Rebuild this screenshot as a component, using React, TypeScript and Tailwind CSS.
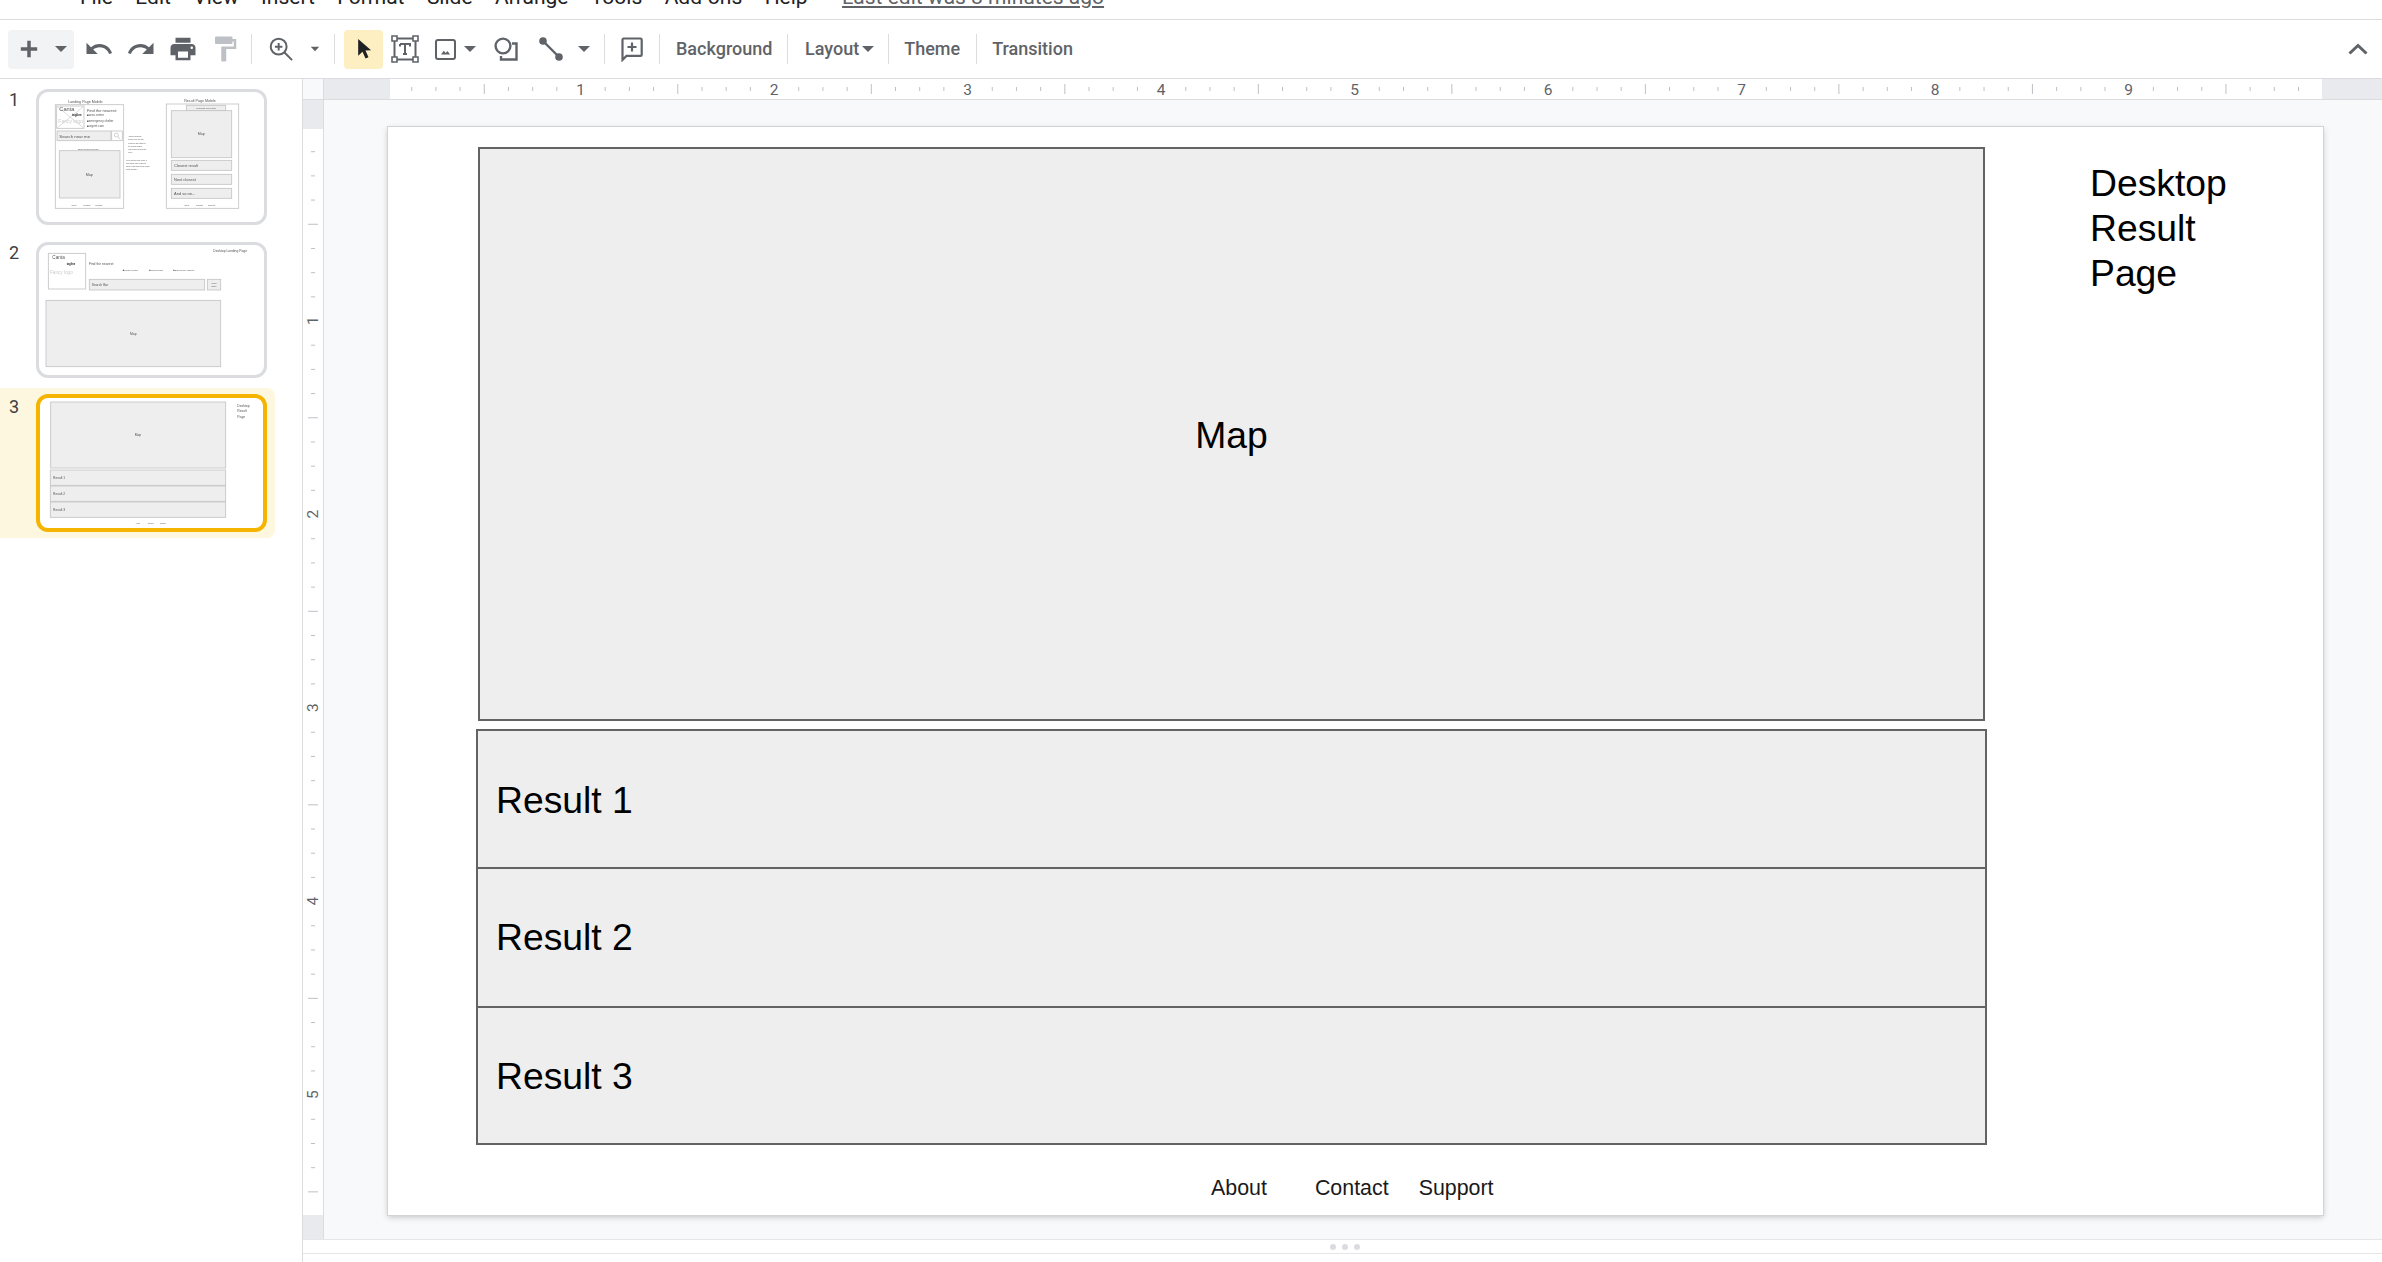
import type { ReactNode } from 'react';

const menus = ['File', 'Edit', 'View', 'Insert', 'Format', 'Slide', 'Arrange', 'Tools', 'Add-ons', 'Help'];
const results = [
  { label: 'Result 1', row: 'h-[136px] pt-[4px]' },
  { label: 'Result 2', row: 'h-[139px] border-t-2 border-[#636363] pt-[1px]' },
  { label: 'Result 3', row: 'h-[137px] border-t-2 border-[#636363] pt-[2px]' },
];
const hTicks = Array.from({ length: 80 }, (_, i) => i);
const vTicks = Array.from({ length: 45 }, (_, i) => i);

function Caret({ className = '' }: { className?: string }) {
  return (
    <svg width="14" height="8" viewBox="0 0 14 8" className={className}>
      <path d="M1 1h12L7 7z" fill="#5f6368" />
    </svg>
  );
}

function Icon({ children, size = 30 }: { children: ReactNode; size?: number }) {
  return (
    <svg width={size} height={size} viewBox="0 0 24 24" fill="#5f6368">
      {children}
    </svg>
  );
}

function Slot({ className, children }: { className: string; children?: ReactNode }) {
  return <div className={`flex h-full shrink-0 items-center justify-center ${className}`}>{children}</div>;
}

function Sep({ className }: { className: string }) {
  return <div className={`h-[30px] w-px shrink-0 bg-[#dadce0] ${className}`} />;
}

function Toolbar() {
  return (
    <div className="flex h-[59px] shrink-0 items-center border-b border-[#dadce0] pl-[8px] text-[18px] font-medium text-[#5f6368]">
      <div className="flex h-[39px] w-[66px] shrink-0 items-center rounded bg-[#f1f3f4] pl-[7px]">
        <Icon size={28}>
          <path d="M19 13.5h-5.5V19h-3v-5.5H5v-3h5.5V5h3v5.5H19z" />
        </Icon>
        <Caret className="ml-[11px]" />
      </div>
      <Slot className="ml-[4px] w-[42px]">
        <Icon>
          <path d="M12.5 8c-2.65 0-5.05.99-6.9 2.6L2 7v9h9l-3.62-3.62c1.39-1.16 3.16-1.88 5.12-1.88 3.54 0 6.55 2.31 7.6 5.5l2.37-.78C21.08 11.03 17.15 8 12.5 8z" />
        </Icon>
      </Slot>
      <Slot className="w-[42px]">
        <Icon>
          <path d="M18.4 10.6C16.55 8.99 14.15 8 11.5 8c-4.65 0-8.58 3.03-9.96 7.22L3.9 16c1.05-3.19 4.05-5.5 7.6-5.5 1.95 0 3.73.72 5.12 1.88L13 16h9V7l-3.6 3.6z" />
        </Icon>
      </Slot>
      <Slot className="w-[42px]">
        <Icon>
          <path d="M19 8H5c-1.66 0-3 1.34-3 3v6h4v4h12v-4h4v-6c0-1.66-1.34-3-3-3zm-3 11H8v-5h8v5zm3-7c-.55 0-1-.45-1-1s.45-1 1-1 1 .45 1 1-.45 1-1 1zm-1-9H6v4h12V3z" />
        </Icon>
      </Slot>
      <Slot className="w-[42px]">
        <svg width="30" height="30" viewBox="0 0 24 24" fill="#bdc1c6">
          <path d="M18 4V3c0-.55-.45-1-1-1H5c-.55 0-1 .45-1 1v4c0 .55.45 1 1 1h12c.55 0 1-.45 1-1V6h1v4H9v11c0 .55.45 1 1 1h2c.55 0 1-.45 1-1v-9h8V4h-3z" />
        </svg>
      </Slot>
      <Sep className="ml-[5px]" />
      <Slot className="w-[58px]">
        <svg width="28" height="28" viewBox="0 0 24 24" fill="none" stroke="#5f6368" strokeWidth="1.7">
          <circle cx="10" cy="10" r="6.8" />
          <path d="M15 15l6.5 6.5M10 6.8v6.4M6.8 10h6.4" />
        </svg>
      </Slot>
      <Slot className="w-[10px]">
        <Caret />
      </Slot>
      <Sep className="ml-[14px]" />
      <div className="ml-[9px] flex h-[39px] w-[39px] shrink-0 items-center justify-center rounded bg-[#feefc3]">
        <svg width="20" height="24" viewBox="0 0 24 28" fill="#202124">
          <path d="M5 2v20l5.2-4.8 3.6 8.3 3.6-1.6-3.6-8 6.7-.4z" />
        </svg>
      </div>
      <Slot className="w-[44px]">
        <svg width="28" height="28" viewBox="0 0 28 28" fill="none" stroke="#5f6368" strokeWidth="2">
          <path d="M3.5 3.5h21v21h-21z" />
          <path d="M1 1h5v5H1zM22 1h5v5h-5zM1 22h5v5H1zM22 22h5v5h-5z" fill="#fff" strokeWidth="1.6" />
          <path d="M9 9h10v2.5M9 11.5V9M14 9v10M12 19h4" strokeWidth="2" />
        </svg>
      </Slot>
      <Slot className="w-[36px]">
        <svg width="21" height="21" viewBox="0 0 21 21" fill="none" stroke="#5f6368" strokeWidth="2">
          <rect x="1" y="1" width="19" height="19" rx="2" />
          <path d="M6 15.5l2.8-3.8 2 2.4 1.7-2 2.6 3.4z" fill="#5f6368" stroke="none" />
        </svg>
      </Slot>
      <Slot className="w-[14px]">
        <Caret />
      </Slot>
      <Slot className="w-[58px]">
        <svg width="24" height="24" viewBox="0 0 24 24" fill="none" stroke="#5f6368" strokeWidth="2.4">
          <circle cx="9" cy="9" r="7.4" />
          <path d="M18 6.5h4.5V22.5H7V19" />
        </svg>
      </Slot>
      <Slot className="w-[32px]">
        <svg width="24" height="24" viewBox="0 0 24 24" fill="none" stroke="#5f6368" strokeWidth="2.4">
          <path d="M4 4l16 16" />
          <circle cx="4" cy="4" r="2.6" fill="#5f6368" />
          <circle cx="20" cy="20" r="2.6" fill="#5f6368" />
        </svg>
      </Slot>
      <Slot className="w-[34px]">
        <Caret />
      </Slot>
      <Sep className="ml-[3px]" />
      <Slot className="w-[54px]">
        <svg width="22" height="25" viewBox="0 0 22 25" fill="none" stroke="#5f6368" strokeWidth="2.2">
          <path d="M2.5 1.5h17a1.2 1.2 0 0 1 1.2 1.2v15a1.2 1.2 0 0 1-1.2 1.2H5.5l-4 4V2.7a1.2 1.2 0 0 1 1-1.2z" />
          <path d="M11 5.5v9M6.5 10h9" />
        </svg>
      </Slot>
      <Sep className="" />
      <span className="mb-[1px] ml-[16px] w-[96px] shrink-0">Background</span>
      <Sep className="ml-[15px]" />
      <span className="mb-[1px] ml-[17px] flex shrink-0 items-center">
        Layout
        <Caret className="ml-[2px]" />
      </span>
      <Sep className="ml-[13px]" />
      <span className="mb-[1px] ml-[15px] shrink-0">Theme</span>
      <Sep className="ml-[16px]" />
      <span className="mb-[1px] ml-[15px] shrink-0">Transition</span>
      <svg width="20" height="12" viewBox="0 0 20 12" fill="none" stroke="#5f6368" strokeWidth="3" className="ml-auto mr-[14px]">
        <path d="M1.5 10.5L10 2.5l8.5 8" />
      </svg>
    </div>
  );
}

function HorizontalRuler() {
  return (
    <svg width="2079" height="21" viewBox="0 0 2079 21" className="block shrink-0">
      <rect width="2079" height="20" fill="#fff" />
      <rect width="20" height="20" fill="#f8f9fa" />
      <rect x="21" width="66" height="20" fill="#e8eaed" />
      <rect x="2019" width="60" height="20" fill="#e8eaed" />
      <rect x="20" width="1" height="20" fill="#dadce0" />
      <rect y="20" width="2079" height="1" fill="#dadce0" />
      {hTicks.map((i) => {
        const x = 84 + i * 24.19;
        if (i === 0) return null;
        if (i % 8 === 0)
          return (
            <text key={i} x={x} y="16" textAnchor="middle" fontSize="15.5" fontFamily="Roboto, sans-serif" fill="#5f6368">
              {i / 8}
            </text>
          );
        const half = i % 4 === 0;
        return <rect key={i} x={x} y={half ? 5 : 8} width="1" height={half ? 10 : 4} fill="#bdc1c6" />;
      })}
    </svg>
  );
}

function VerticalRuler() {
  return (
    <svg width="21" height="1139" viewBox="0 0 21 1139" className="block shrink-0">
      <rect width="20" height="1139" fill="#fff" />
      <rect width="20" height="29" fill="#e8eaed" />
      <rect y="1115" width="20" height="24" fill="#e8eaed" />
      <rect x="20" width="1" height="1139" fill="#dadce0" />
      {vTicks.map((i) => {
        const y = 27 + i * 24.19;
        if (i === 0) return null;
        if (i % 8 === 0)
          return (
            <text
              key={i}
              x="10"
              y={y}
              transform={`rotate(-90 10 ${y})`}
              textAnchor="middle"
              dominantBaseline="central"
              fontSize="15.5"
              fontFamily="Roboto, sans-serif"
              fill="#5f6368"
            >
              {i / 8}
            </text>
          );
        const half = i % 4 === 0;
        return <rect key={i} x={half ? 5 : 8} y={y} width={half ? 10 : 4} height="1" fill="#bdc1c6" />;
      })}
    </svg>
  );
}

// thumbnail drawings, coordinates are in 3x of the thumbnail
function T({ x, y, s = 11, a, c = '#555', b, children }: { x: number; y: number; s?: number; a?: 'middle'; c?: string; b?: boolean; children: string }) {
  return (
    <text x={x} y={y} fontSize={s} textAnchor={a} fill={c} fontWeight={b ? 700 : 400} dominantBaseline="central" fontFamily="'Liberation Sans', sans-serif">
      {children}
    </text>
  );
}

function R({ x, y, w, h, f = '#eeeeee' }: { x: number; y: number; w: number; h: number; f?: string }) {
  return <rect x={x} y={y} width={w} height={h} fill={f} stroke="#c4c4c4" strokeWidth="2.5" />;
}

function ThumbOne() {
  return (
    <svg viewBox="117 36 675 390" className="h-full w-full blur-[0.3px]">
      <T x={256} y={65} a="middle">Landing Page Mobile</T>
      <R x={166} y={74} w={205} h={311} f="#fff" />
      <R x={170} y={78} w={82} h={67} f="#fff" />
      <path d="M170 78l82 67M252 78l-82 67" stroke="#ccc" strokeWidth="2" />
      <T x={178} y={87} s={17}>Canta</T>
      <T x={216} y={104} s={9} c="#222" b>tagline</T>
      <T x={175} y={122} s={15} c="#ccc">Fancy logo</T>
      <T x={261} y={91} s={12}>Find the nearest:</T>
      <T x={261} y={104} s={9}>■area center</T>
      <T x={261} y={122} s={9}>■emergency shelter</T>
      <T x={261} y={137} s={9}>■urgent care</T>
      <R x={171} y={153} w={162} h={29} />
      <T x={178} y={170} s={13}>Search near me</T>
      <R x={335} y={153} w={32} h={29} f="#fff" />
      <circle cx="349" cy="165" r="6" fill="none" stroke="#bbb" strokeWidth="2" />
      <path d="M353 170l8 8" stroke="#bbb" strokeWidth="2" />
      <T x={265} y={208} s={6} a="middle" c="#444">some helper text below</T>
      <R x={178} y={212} w={182} h={142} />
      <T x={268} y={284} a="middle">Map</T>
      <T x={213} y={376} s={6}>About</T>
      <T x={250} y={376} s={6}>Contact</T>
      <T x={286} y={376} s={6}>Support</T>
      <T x={385} y={168} s={5}>"Upon clicking the</T>
      <T x={385} y={178} s={5}>search icon, the map</T>
      <T x={385} y={188} s={5}>zooms in and results of</T>
      <T x={385} y={198} s={5}>the nearest search</T>
      <T x={385} y={207} s={5}>criteria appear below the</T>
      <T x={385} y={215} s={5}>map."</T>
      <T x={378} y={240} s={5}>"Upon clicking each result, a</T>
      <T x={378} y={250} s={5}>new tab will open to show a</T>
      <T x={378} y={259} s={5}>google result page for the actual</T>
      <T x={378} y={268} s={5}>facility website."</T>
      <T x={600} y={62} a="middle">Result Page Mobile</T>
      <R x={499} y={72} w={217} h={313} f="#fff" />
      <R x={559} y={76} w={118} h={16} />
      <T x={618} y={84} s={6} a="middle">Searching with results</T>
      <R x={514} y={92} w={181} h={141} />
      <T x={604} y={163} a="middle">Map</T>
      <R x={514} y={241} w={181} h={30} />
      <T x={522} y={256} s={12}>Closest result</T>
      <R x={514} y={283} w={181} h={30} />
      <T x={522} y={298} s={12}>Next closest</T>
      <R x={514} y={325} w={181} h={30} />
      <T x={522} y={340} s={12}>And so on...</T>
      <T x={551} y={376} s={6}>About</T>
      <T x={588} y={376} s={6}>Contact</T>
      <T x={624} y={376} s={6}>Support</T>
    </svg>
  );
}

function ThumbTwo() {
  return (
    <svg viewBox="117 45 675 390" className="h-full w-full blur-[0.3px]">
      <T x={640} y={64} s={10}>Desktop Landing Page</T>
      <R x={145} y={70} w={112} h={107} f="#fff" />
      <T x={157} y={82} s={14}>Canta</T>
      <T x={200} y={104} s={8} c="#222" b>tagline</T>
      <T x={150} y={127} s={14} c="#ccc">Fancy logo</T>
      <T x={267} y={101} s={10}>Find the nearest:</T>
      <T x={368} y={119} s={7}>■Urban Center</T>
      <T x={448} y={119} s={7}>■Urgent Care</T>
      <T x={520} y={119} s={7}>■Emergency Shelter</T>
      <R x={268} y={148} w={346} h={32} />
      <T x={275} y={164} s={10}>Search Bar</T>
      <R x={622} y={148} w={40} h={32} />
      <T x={642} y={160} s={5} a="middle">Search</T>
      <T x={642} y={168} s={5} a="middle">Button</T>
      <R x={138} y={211} w={524} h={199} />
      <T x={400} y={313} s={10} a="middle">Map</T>
    </svg>
  );
}

function ThumbThree() {
  return (
    <svg viewBox="120 40 669 390" className="h-full w-full blur-[0.3px]">
      <R x={152} y={52} w={525} h={198} />
      <T x={414} y={151} s={10} a="middle">Map</T>
      <R x={151} y={256} w={526} h={46} />
      <R x={151} y={304} w={526} h={46} />
      <R x={151} y={352} w={526} h={46} />
      <T x={159} y={281} s={10}>Result 1</T>
      <T x={159} y={329} s={10}>Result 2</T>
      <T x={159} y={377} s={10}>Result 3</T>
      <T x={712} y={65} s={10}>Desktop</T>
      <T x={712} y={80} s={10}>Result</T>
      <T x={712} y={98} s={10}>Page</T>
      <T x={407} y={414} s={5}>About</T>
      <T x={443} y={414} s={5}>Contact</T>
      <T x={480} y={414} s={5}>Support</T>
    </svg>
  );
}

function Filmstrip() {
  return (
    <div className="w-[303px] shrink-0 border-r border-[#dadce0] pt-[10px] text-[18px] text-[#3c4043]">
      <div className="flex pl-[9px]">
        <span className="w-[27px] leading-[22px]">1</span>
        <div className="h-[136px] w-[231px] overflow-hidden rounded-[12px] border-[3px] border-[#dadce0] bg-white">
          <ThumbOne />
        </div>
      </div>
      <div className="mt-[17px] flex pl-[9px]">
        <span className="w-[27px] leading-[22px]">2</span>
        <div className="h-[136px] w-[231px] overflow-hidden rounded-[12px] border-[3px] border-[#dadce0] bg-white">
          <ThumbTwo />
        </div>
      </div>
      <div className="mt-[10px] flex h-[150px] w-[275px] items-center rounded-r-lg bg-[#fef7e0] pl-[9px]">
        <span className="mb-[112px] w-[27px] leading-[22px]">3</span>
        <div className="h-[138px] w-[231px] overflow-hidden rounded-[12px] border-[4px] border-[#f4b400] bg-white">
          <ThumbThree />
        </div>
      </div>
    </div>
  );
}

function Slide() {
  return (
    <div className="ml-[64px] mt-[27px] flex h-[1088px] w-[1935px] bg-white font-['Liberation_Sans',sans-serif] text-black shadow-[0_0_0_1px_#d4d4d4,0_2px_6px_rgba(60,64,67,0.3)]">
      <div className="ml-[88px] w-[1511px] shrink-0">
        <div className="ml-[2px] mt-[20px] flex h-[574px] w-[1507px] items-center justify-center border-2 border-[#636363] bg-[#eeeeee] pt-[3px] text-[37.3px]">
          Map
        </div>
        <div className="mt-[8px] border-2 border-[#636363]">
          {results.map((r) => (
            <div key={r.label} className={`flex items-center bg-[#eeeeee] pl-[18px] text-[37.3px] ${r.row}`}>
              {r.label}
            </div>
          ))}
        </div>
        <div className="mt-[29px] flex pl-[735px] text-[21.4px] leading-[28px] text-[#1a1a1a]">
          <span>About</span>
          <span className="ml-[48px]">Contact</span>
          <span className="ml-[30px]">Support</span>
        </div>
      </div>
      <div className="ml-[103px] mt-[34px] text-[37.3px] leading-[45px]">
        Desktop
        <br />
        Result
        <br />
        Page
      </div>
    </div>
  );
}

export default function App() {
  return (
    <div className="flex h-[1262px] w-[2382px] flex-col overflow-hidden bg-white font-['Roboto',sans-serif]">
      <div className="flex h-[20px] shrink-0 gap-[22.4px] overflow-hidden border-b border-[#dadce0] pl-[80px] text-[21px] leading-[26px] text-[#202124]">
        {menus.map((m) => (
          <span key={m} className="-mt-[16px]">
            {m}
          </span>
        ))}
        <span className="-mt-[16px] ml-[12px] text-[#5f6368] underline">Last edit was 8 minutes ago</span>
      </div>
      <Toolbar />
      <div className="flex min-h-0 flex-1">
        <Filmstrip />
        <div className="flex min-w-0 flex-1 flex-col">
          <HorizontalRuler />
          <div className="flex h-[1139px] shrink-0">
            <VerticalRuler />
            <div className="min-w-0 flex-1 bg-[#f8f9fa]">
              <Slide />
            </div>
          </div>
          <div className="flex h-[15px] shrink-0 items-center justify-center gap-[6px] border-y border-[#e4e6e8] pl-[4px]">
            <div className="h-[6px] w-[6px] rounded-full bg-[#dadce0]" />
            <div className="h-[6px] w-[6px] rounded-full bg-[#dadce0]" />
            <div className="h-[6px] w-[6px] rounded-full bg-[#dadce0]" />
          </div>
        </div>
      </div>
    </div>
  );
}
